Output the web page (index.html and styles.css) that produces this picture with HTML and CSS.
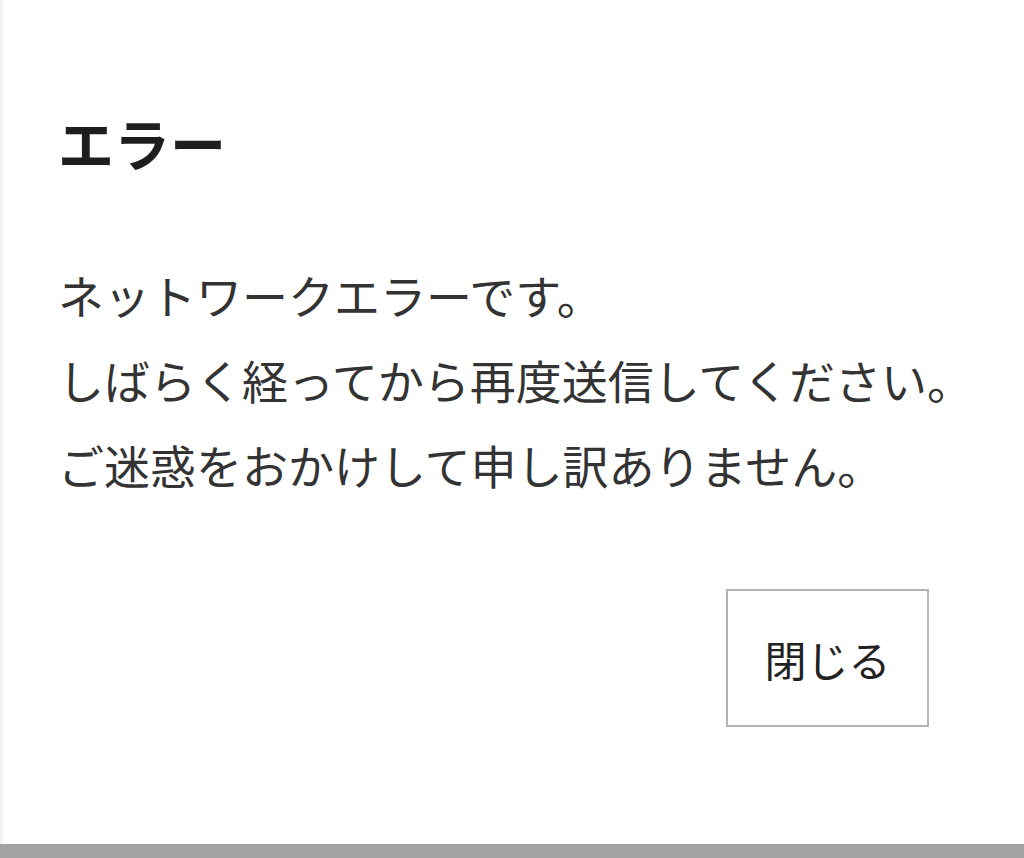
FILE: index.html
```html
<!DOCTYPE html>
<html lang="ja">
<head>
<meta charset="utf-8">
<title>エラー</title>
<link rel="stylesheet" href="styles.css">
</head>
<body>
<div class="dialog">
  <h1 class="title">エラー</h1>
  <p class="message">ネットワークエラーです。<br>しばらく経ってから再度送信してください。<br>ご迷惑をおかけして申し訳ありません。</p>
  <div class="actions">
    <button class="btn-close" type="button">閉じる</button>
  </div>
</div>
</body>
</html>
```
FILE: styles.css
```css
html, body {
  margin: 0;
  padding: 0;
  width: 1024px;
  height: 858px;
  overflow: hidden;
  background: #a2a2a2;
}
.dialog {
  box-sizing: border-box;
  width: 1024px;
  height: 844px;
  background: #ffffff;
  border-left: 3px solid #f1f1f6;
  padding: 100px 0 0 55px;
  font-family: "Noto Sans CJK JP", "Noto Sans", sans-serif;
  color: #333333;
}
.title {
  margin: 0;
  font-size: 56px;
  font-weight: 700;
  line-height: 84px;
  color: #1e1e1e;
}
.message {
  margin: 68px 0 0 0;
  font-size: 46px;
  line-height: 85px;
  font-weight: 400;
}
.actions {
  display: flex;
  justify-content: flex-end;
  padding-right: 95px;
  margin-top: 82px;
}
.btn-close {
  box-sizing: border-box;
  width: 203px;
  height: 138px;
  background: #ffffff;
  border: 2px solid #b4b4b4;
  border-radius: 0;
  font-family: "Noto Sans CJK JP", "Noto Sans", sans-serif;
  font-size: 42px;
  color: #222222;
  padding: 0;
}
```
